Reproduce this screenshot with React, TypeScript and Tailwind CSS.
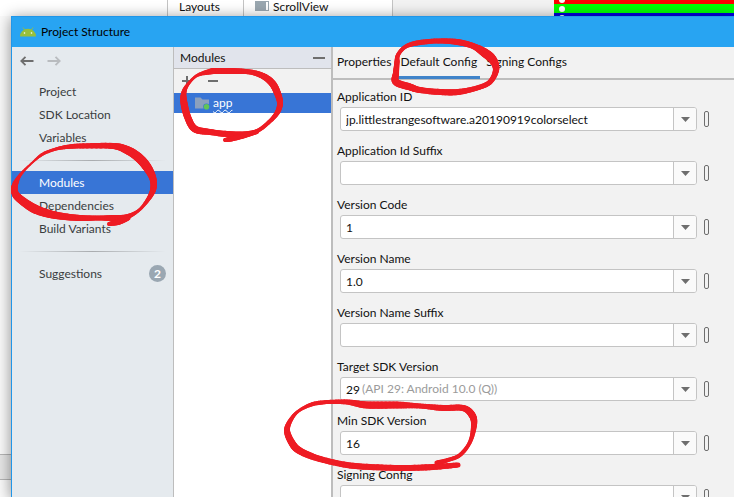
import { useState } from 'react'

type Point = [number, number, number]

const NAV_GROUPS = [
  ['Project', 'SDK Location', 'Variables'],
  ['Modules', 'Dependencies', 'Build Variants'],
  ['Suggestions'],
]

const TABS = ['Properties', 'Default Config', 'Signing Configs']

const FIELDS = [
  { id: 'application-id', label: 'Application ID', value: 'jp.littlestrangesoftware.a20190919colorselect' },
  { id: 'application-id-suffix', label: 'Application Id Suffix', value: '' },
  { id: 'version-code', label: 'Version Code', value: '1' },
  { id: 'version-name', label: 'Version Name', value: '1.0' },
  { id: 'version-name-suffix', label: 'Version Name Suffix', value: '' },
  { id: 'target-sdk', label: 'Target SDK Version', value: '29', hint: '(API 29: Android 10.0 (Q))' },
  { id: 'min-sdk', label: 'Min SDK Version', value: '16' },
  { id: 'signing-config', label: 'Signing Config', value: '' },
]

// Marker strokes: x, y, pen width
const STROKES: Point[][] = [
  [[66, 147, 4], [80, 146, 5], [113, 146, 6], [127, 150, 8], [138, 157, 9], [147, 167, 9], [153, 179, 7], [153, 190, 6], [147, 201, 4], [138, 211, 3], [126, 217, 5], [113, 218, 6], [98, 218, 5], [80, 218, 6], [60, 216, 7], [46, 213, 8], [33, 208, 9], [20, 199, 8], [15, 193, 7], [15, 185, 6], [21, 174, 3], [33, 162, 2], [43, 154, 3], [56, 149, 3], [66, 147, 4]],
  [[128, 218, 5], [118, 222, 6], [109, 224, 4]],
  [[213, 71, 6], [232, 71, 6], [250, 72, 5], [263, 76, 6], [272, 83, 7], [277, 92, 7], [280, 103, 6], [277, 113, 5], [268, 123, 4], [257, 131, 4], [243, 134, 5], [227, 134, 6], [210, 132, 6], [195, 129, 7], [188, 118, 7], [184, 103, 7], [184, 92, 5], [189, 83, 3], [198, 75, 3], [213, 71, 6]],
  [[257, 132, 4], [243, 136, 5], [231, 139, 5], [225, 140, 4]],
  [[397, 62, 5], [396, 73, 6], [396, 82, 7], [410, 87, 7], [420, 90, 6], [440, 92, 6], [458, 92, 6], [477, 88, 5], [490, 82, 5], [496, 70, 6], [493, 60, 8], [485, 53, 9], [473, 46, 6], [457, 42, 6], [437, 41, 5], [417, 43, 5], [405, 47, 4], [398, 55, 4], [397, 62, 5]],
  [[327, 402, 4], [347, 402, 5], [367, 405, 7], [397, 405, 7], [420, 406, 5], [443, 408, 6], [463, 408, 6], [472, 415, 7], [474, 425, 6], [470, 442, 4], [460, 455, 4], [448, 460, 4], [437, 463, 5]],
  [[458, 465, 5], [433, 467, 6], [403, 468, 6], [370, 467, 6], [347, 465, 6], [320, 459, 6], [300, 451, 7], [292, 443, 7], [287, 430, 6], [292, 418, 4], [300, 410, 3], [313, 404, 4], [327, 402, 4]],
]

// Catmull-Rom through the points, so the pen width changes smoothly too
function smooth(points: Point[]) {
  const out: Point[] = []
  for (let i = 0; i < points.length - 1; i++) {
    const p0 = points[Math.max(i - 1, 0)]
    const p1 = points[i]
    const p2 = points[i + 1]
    const p3 = points[Math.min(i + 2, points.length - 1)]
    for (let s = 0; s < 8; s++) {
      const t = s / 8
      out.push([0, 1, 2].map(k =>
        0.5 * (2 * p1[k] + (p2[k] - p0[k]) * t +
          (2 * p0[k] - 5 * p1[k] + 4 * p2[k] - p3[k]) * t * t +
          (3 * p1[k] - p0[k] - 3 * p2[k] + p3[k]) * t * t * t)
      ) as Point)
    }
  }
  out.push(points[points.length - 1])
  return out
}

function Marker() {
  return (
    <svg width="734" height="497" className="absolute top-0 left-0 z-20 pointer-events-none" aria-hidden="true">
      <g stroke="#ee1c24" strokeLinecap="round">
        {STROKES.map((stroke, i) => {
          const pts = smooth(stroke)
          return pts.slice(1).map((p, j) => (
            <line key={`${i}-${j}`} x1={pts[j][0]} y1={pts[j][1]} x2={p[0]} y2={p[1]} strokeWidth={p[2]} />
          ))
        })}
      </g>
    </svg>
  )
}

function AndroidIcon() {
  return (
    <svg width="16" height="10" viewBox="0 0 16 10" aria-hidden="true">
      <path d="M3 0.5 L4.6 3 M13 0.5 L11.4 3" stroke="#97c03d" strokeWidth="0.9" />
      <path d="M0 9.5 A8 7.8 0 0 1 16 9.5 Z" fill="#97c03d" />
      <circle cx="4.5" cy="6" r="0.8" fill="#fff" />
      <circle cx="11.5" cy="6" r="0.8" fill="#fff" />
    </svg>
  )
}

function Arrow({ back }: { back?: boolean }) {
  return (
    <svg width="14" height="10" viewBox="0 0 14 10" fill="none" stroke={back ? '#6e6e6e' : '#b9bcbf'} strokeWidth="1.8" aria-hidden="true">
      <path d={back ? 'M13.5 5 H1.5 M5.5 0.8 L1.3 5 L5.5 9.2' : 'M0.5 5 H12.5 M8.5 0.8 L12.7 5 L8.5 9.2'} />
    </svg>
  )
}

function FolderIcon() {
  return (
    <svg width="15" height="13" viewBox="0 0 15 13" aria-hidden="true">
      <path d="M0 0.5 H5.5 L7.5 2.5 H14 V11.5 H0 Z" fill="#8ba0bd" />
      <circle cx="11.5" cy="9.8" r="3.4" fill="#3875d6" />
      <circle cx="11.5" cy="9.8" r="2.8" fill="#62c554" />
    </svg>
  )
}

function Backdrop() {
  return (
    <div className="flex h-4 overflow-hidden bg-[#f2f2f2] leading-[14px]">
      <div className="w-[167px] bg-white" />
      <div className="w-[77px] shrink-0 border-x border-[#c4c4c4] bg-white pl-[11px]">Layouts</div>
      <div className="flex w-[149px] shrink-0 gap-1 border-r border-[#c4c4c4] bg-white pl-[11px]">
        <svg width="14" height="10" viewBox="0 0 14 10" className="mt-px" aria-hidden="true">
          <path d="M0 0 H14 V10 H0 Z" fill="#9aa7b0" />
          <path d="M11 1 H13 V9 H11 Z" fill="#fff" />
        </svg>
        <span>ScrollView</span>
      </div>
      <div className="w-[161px] shrink-0" />
      <svg className="h-4 flex-1" aria-hidden="true">
        <rect width="100%" height="4" fill="#ff0000" />
        <rect y="4" width="100%" height="9" fill="#00ff00" />
        <rect y="13" width="100%" height="3" fill="#0000e0" />
        <circle cx="8" cy="0" r="3" fill="#fff" />
        <circle cx="8" cy="9" r="3" fill="#fff" />
        <circle cx="8" cy="18" r="3" fill="#fff" />
      </svg>
    </div>
  )
}

function Sidebar() {
  const [page, setPage] = useState('Modules')
  return (
    <nav className="w-[162px] shrink-0 border-r border-[#bdbdbd] bg-[#e5eaee] text-[#3a3d40]">
      <div className="flex h-[33px] items-start gap-[13px] pt-[9px] pl-2">
        <button aria-label="Back"><Arrow back /></button>
        <button aria-label="Forward"><Arrow /></button>
      </div>
      {NAV_GROUPS.map((group, i) => (
        <div key={i}>
          {i > 0 && (
            <div className="flex h-[22px] items-center px-[7px]">
              <div className="h-px w-full bg-linear-to-r from-transparent via-[#a9acaf] to-transparent" />
            </div>
          )}
          {group.map(item => (
            <button
              key={item}
              onClick={() => setPage(item)}
              className={`flex h-[23px] w-full items-center justify-between pr-[7px] pl-[27px] ${page === item ? 'bg-[#3875d6] text-white' : ''}`}
            >
              {item}
              {item === 'Suggestions' && (
                <span className="flex size-[17px] items-center justify-center rounded-full bg-[#9aa7b2] text-[12px] font-bold text-white">2</span>
              )}
            </button>
          ))}
        </div>
      ))}
    </nav>
  )
}

function ModuleList() {
  return (
    <section className="flex w-[157px] shrink-0 flex-col bg-white">
      <div className="flex h-[22px] items-center justify-between border-b border-[#bdbdbd] bg-[#e1e4ec] pr-[6px] pl-[6px]">
        <h2>Modules</h2>
        <button aria-label="Hide" className="h-[2px] w-3 bg-[#6e6e6e]" />
      </div>
      <div className="flex h-6 items-center gap-4 bg-[#f2f2f2] pl-2">
        <button aria-label="Add module">
          <svg width="10" height="10" viewBox="0 0 10 10" stroke="#6e6e6e" strokeWidth="2" aria-hidden="true">
            <path d="M0 5 H10 M5 0 V10" />
          </svg>
        </button>
        <button aria-label="Remove module" className="h-[2px] w-[10px] bg-[#6e6e6e]" />
      </div>
      <button className="flex h-5 items-center gap-[3px] bg-[#3875d6] pl-[21px] text-white">
        <FolderIcon />
        <span className="underline decoration-wavy decoration-1 underline-offset-2 [text-decoration-skip-ink:none]">app</span>
      </button>
    </section>
  )
}

function Field({ id, label, value, hint }: { id: string, label: string, value: string, hint?: string }) {
  return (
    <div className="mb-[10px]">
      <label htmlFor={id} className="block pl-1 leading-5">{label}</label>
      <div className="flex items-center gap-[7px] pr-[25px] pl-[7px]">
        <div className="flex h-6 flex-1 items-center overflow-hidden rounded-[3px] border border-[#c4c4c4] bg-white">
          <input
            id={id}
            defaultValue={value}
            className={`h-full pl-[5px] outline-none ${hint ? 'w-[21px]' : 'min-w-0 flex-1'}`}
          />
          {hint && <span className="flex-1 text-[#9b9b9b]">{hint}</span>}
          <button aria-label={`${label} options`} className="flex h-full w-[23px] items-center justify-center border-l border-[#c4c4c4] bg-[#fafafa]">
            <svg width="9" height="5" viewBox="0 0 9 5" aria-hidden="true">
              <path d="M0 0 H9 L4.5 5 Z" fill="#6e6e6e" />
            </svg>
          </button>
        </div>
        <button aria-label={`Bind ${label} to variable`} className="h-4 w-[5px] rounded-[2px] border border-[#6e6e6e]" />
      </div>
    </div>
  )
}

function ConfigPanel() {
  const [tab, setTab] = useState('Default Config')
  return (
    <section className="min-w-0 flex-1 border-l-2 border-[#bdbdbd] bg-[#f2f2f2]">
      <div className="flex h-[33px] gap-[3px] border-b-2 border-[#bdbdbd] pl-px">
        {TABS.map(t => (
          <button
            key={t}
            onClick={() => setTab(t)}
            className={`h-8 border-b-[3px] px-[3px] ${tab === t ? 'border-[#4083c9]' : 'border-transparent'}`}
          >
            {t}
          </button>
        ))}
      </div>
      <div className="pt-[7px]">
        {FIELDS.map(f => <Field key={f.id} {...f} />)}
      </div>
    </section>
  )
}

export default function App() {
  return (
    <div className="relative flex h-screen flex-col overflow-hidden bg-white font-['Lato',sans-serif] text-[12px] text-[#111111]">
      <Backdrop />
      <div className="flex min-h-0 flex-1">
        <div className="flex w-[11px] shrink-0 flex-col justify-end bg-[#fafafa]">
          <div className="h-[26px] border-y border-[#b5b5b5] bg-[#e6e6e6]" />
          <div className="h-[17px]" />
        </div>
        <main className="z-10 flex min-w-0 flex-1 flex-col border-t border-l border-[#2196e8] shadow-[0_2px_14px_rgba(0,0,0,0.45)]">
          <header className="flex h-[30px] shrink-0 items-center gap-[5px] bg-[#28a4f2] pl-2 text-black">
            <AndroidIcon />
            <h1>Project Structure</h1>
          </header>
          <div className="flex min-h-0 flex-1">
            <Sidebar />
            <ModuleList />
            <ConfigPanel />
          </div>
        </main>
      </div>
      <Marker />
    </div>
  )
}
